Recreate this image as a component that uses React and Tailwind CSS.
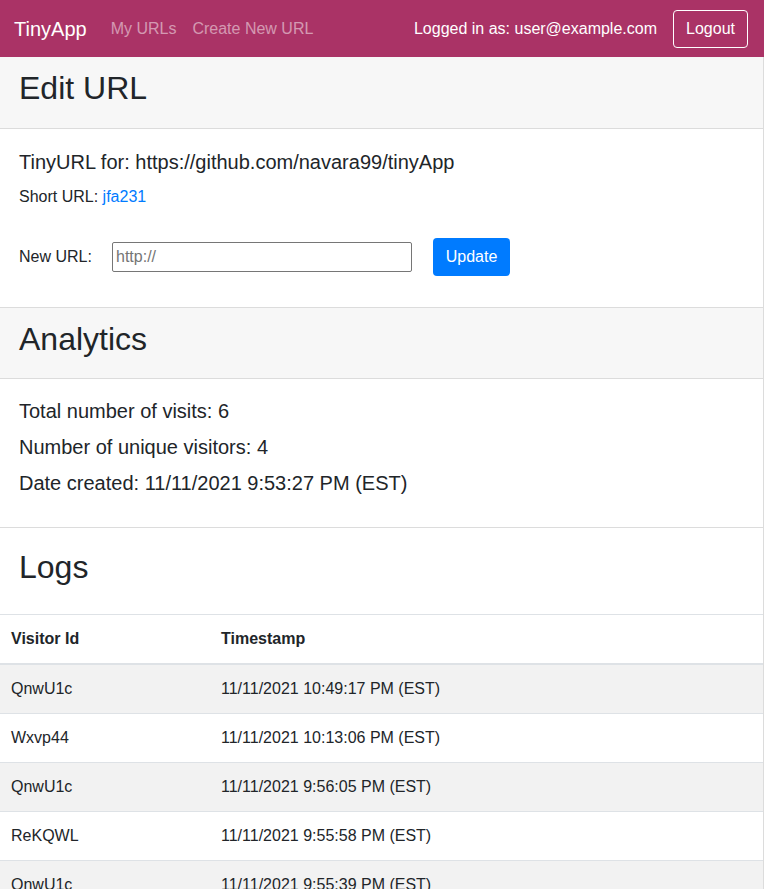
import React from 'react';

const logs = [
  { id: 'QnwU1c', time: '11/11/2021 10:49:17 PM (EST)' },
  { id: 'Wxvp44', time: '11/11/2021 10:13:06 PM (EST)' },
  { id: 'QnwU1c', time: '11/11/2021 9:56:05 PM (EST)' },
  { id: 'ReKQWL', time: '11/11/2021 9:55:58 PM (EST)' },
  { id: 'QnwU1c', time: '11/11/2021 9:55:39 PM (EST)' },
  { id: 'Wxvp44', time: '11/11/2021 9:54:12 PM (EST)' },
];

function Navbar() {
  return (
    <nav className="flex items-center justify-between h-[57px] pl-[14px] pr-[16px] bg-[#aa3366]">
      <div className="flex items-center">
        <a href="#" className="text-white text-[20px] mr-[24px]">TinyApp</a>
        <a href="#" className="text-white/50 text-[16px] mr-[16px]">My URLs</a>
        <a href="#" className="text-white/50 text-[16px]">Create New URL</a>
      </div>
      <div className="flex items-center">
        <span className="text-white text-[16px] mr-[16px]">Logged in as: user@example.com</span>
        <button className="h-[38px] w-[75px] border border-white rounded text-white text-[16px]">Logout</button>
      </div>
    </nav>
  );
}

export default function App() {
  return (
    <div className="font-['Liberation_Sans',Arial,sans-serif] text-[#212529] bg-white min-h-[889px]">
      <Navbar />
      <div className="border-r border-[#dcdcdc]">
        {/* Edit URL */}
        <div className="h-[72px] px-[19px] pt-[12px] bg-[#f7f7f7] border-b border-[#dcdcdc]">
          <h2 className="text-[32px] leading-[38px]">Edit URL</h2>
        </div>
        <div className="px-[19px] pt-[21px] pb-[31px] border-b border-[#dcdcdc]">
          <h5 className="text-[20px] leading-[24px]">TinyURL for: https://github.com/navara99/tinyApp</h5>
          <p className="text-[16px] mt-[11px]">
            Short URL: <a href="#" className="text-[#007bff]">jfa231</a>
          </p>
          <div className="flex items-center mt-[29px]">
            <label className="text-[16px] w-[93px]">New URL:</label>
            <input
              type="text"
              placeholder="http://"
              className="w-[300px] h-[30px] border border-[#767676] rounded-[2px] px-[3px] text-[16px] placeholder:text-[#757575]"
            />
            <button className="ml-[21px] h-[38px] w-[77px] bg-[#007bff] text-white text-[16px] rounded">Update</button>
          </div>
        </div>

        {/* Analytics */}
        <div className="h-[71px] px-[19px] pt-[12px] bg-[#f7f7f7] border-b border-[#dcdcdc]">
          <h2 className="text-[32px] leading-[38px]">Analytics</h2>
        </div>
        <div className="px-[19px] pt-[20px] pb-[20px] border-b border-[#dcdcdc] text-[20px]">
          <p className="leading-[24px] mb-[12px]">Total number of visits: 6</p>
          <p className="leading-[24px] mb-[12px]">Number of unique visitors: 4</p>
          <p className="leading-[24px] mb-[12px]">Date created: 11/11/2021 9:53:27 PM (EST)</p>
        </div>

        {/* Logs */}
        <div className="h-[87px] px-[19px] pt-[20px] border-b border-[#dee2e6]">
          <h2 className="text-[32px] leading-[38px]">Logs</h2>
        </div>
        <table className="w-full text-[16px] border-collapse">
          <thead>
            <tr className="h-[49px] border-b-2 border-[#dee2e6]">
              <th className="text-left font-bold px-[11px] w-[210px]">Visitor Id</th>
              <th className="text-left font-bold px-[11px]">Timestamp</th>
            </tr>
          </thead>
          <tbody>
            {logs.map((log, idx) => (
              <tr key={idx} className={`h-[49px] border-b border-[#dee2e6] ${idx % 2 === 0 ? 'bg-[#f2f2f2]' : 'bg-white'}`}>
                <td className="px-[11px]">{log.id}</td>
                <td className="px-[11px]">{log.time}</td>
              </tr>
            ))}
          </tbody>
        </table>
      </div>
    </div>
  );
}
